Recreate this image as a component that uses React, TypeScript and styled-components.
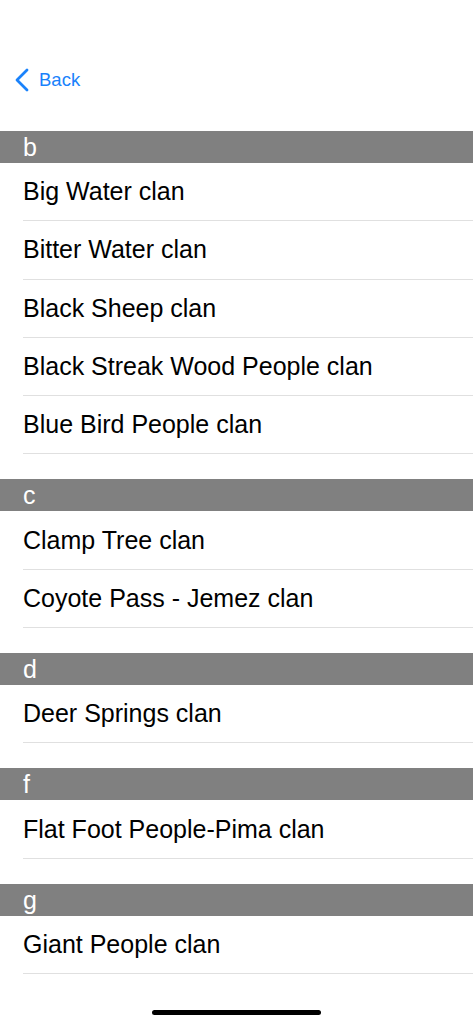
import React from "react";
import styled, { createGlobalStyle } from "styled-components";

const GlobalStyle = createGlobalStyle`
  html, body {
    margin: 0;
    padding: 0;
    background: #fff;
  }
  body {
    font-family: "Liberation Sans", Arial, sans-serif;
    -webkit-font-smoothing: antialiased;
  }
`;

const Screen = styled.div`
  width: 100%;
  min-height: 1024px;
  background: #fff;
  display: flex;
  flex-direction: column;
`;

const NavBar = styled.header`
  height: 131px;
  padding-top: 58px;
  box-sizing: border-box;
`;

const BackButton = styled.button`
  display: flex;
  align-items: center;
  gap: 9px;
  height: 44px;
  padding: 0 0 0 14px;
  border: none;
  background: none;
  color: #1a82fb;
  font-family: "Liberation Sans", Arial, sans-serif;
  font-size: 18.5px;
  cursor: pointer;
`;

const Section = styled.section`
  margin-bottom: 25px;
`;

const SectionHeader = styled.div`
  height: 32px;
  background: #808080;
  color: #fff;
  font-size: 25px;
  line-height: 32px;
  padding-left: 23px;
`;

const Row = styled.div`
  height: 58.3px;
  box-sizing: border-box;
  margin-left: 23px;
  border-bottom: 1px solid #e0e0e0;
  display: flex;
  align-items: center;
  font-size: 25px;
  color: #000;
`;

const HomeIndicator = styled.div`
  position: fixed;
  left: 152px;
  bottom: 9px;
  width: 169px;
  height: 5px;
  border-radius: 3px;
  background: #000;
`;

const sections: { letter: string; items: string[] }[] = [
  {
    letter: "b",
    items: [
      "Big Water clan",
      "Bitter Water clan",
      "Black Sheep clan",
      "Black Streak Wood People clan",
      "Blue Bird People clan",
    ],
  },
  { letter: "c", items: ["Clamp Tree clan", "Coyote Pass - Jemez clan"] },
  { letter: "d", items: ["Deer Springs clan"] },
  { letter: "f", items: ["Flat Foot People-Pima clan"] },
  { letter: "g", items: ["Giant People clan"] },
];

export default function App() {
  return (
    <Screen>
      <GlobalStyle />
      <NavBar>
        <BackButton>
          <svg width="16" height="24" viewBox="0 0 16 24">
            <polyline
              points="13,2 3,12 13,22"
              fill="none"
              stroke="#1a82fb"
              strokeWidth="2.8"
              strokeLinecap="round"
              strokeLinejoin="round"
            />
          </svg>
          Back
        </BackButton>
      </NavBar>
      {sections.map((s) => (
        <Section key={s.letter}>
          <SectionHeader>{s.letter}</SectionHeader>
          {s.items.map((item) => (
            <Row key={item}>{item}</Row>
          ))}
        </Section>
      ))}
      <HomeIndicator />
    </Screen>
  );
}
